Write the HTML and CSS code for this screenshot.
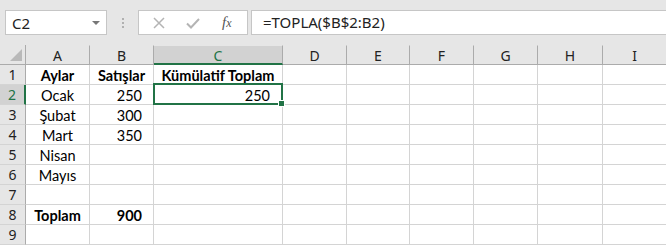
FILE: index.html
```html
<!DOCTYPE html>
<html lang="tr">

<head>
    <meta charset="UTF-8">
    <meta name="viewport" content="width=device-width, initial-scale=1.0">
    <title>Kümülatif Toplam</title>
    <link rel="stylesheet" href="styles.css">
</head>

<body>
    <div class="formula-bar">
        <div class="name-box">
            <span>C2</span>
            <span class="drop"></span>
        </div>
        <div class="grip">
            <span></span><span></span><span></span>
        </div>
        <div class="fx-box">
            <svg class="cancel" width="14" height="14" viewBox="0 0 14 14">
                <path d="M2 2 L12 12 M12 2 L2 12" stroke="#b4b4b4" stroke-width="1.5" fill="none" />
            </svg>
            <svg class="enter" width="16" height="14" viewBox="0 0 16 14">
                <path d="M2 7.5 L6 11.5 L14 3" stroke="#b4b4b4" stroke-width="2" fill="none" />
            </svg>
            <span class="fx">f<i>x</i></span>
        </div>
        <div class="formula-input">=TOPLA($B$2:B2)</div>
    </div>

    <div class="sheet">
        <div class="corner"><span></span></div>
        <div class="col-head">A</div>
        <div class="col-head">B</div>
        <div class="col-head active">C</div>
        <div class="col-head">D</div>
        <div class="col-head">E</div>
        <div class="col-head">F</div>
        <div class="col-head">G</div>
        <div class="col-head">H</div>
        <div class="col-head">I</div>

        <div class="row-head">1</div>
        <div class="cell center bold">Aylar</div>
        <div class="cell center bold">Satışlar</div>
        <div class="cell center bold">Kümülatif Toplam</div>
        <div class="cell"></div><div class="cell"></div><div class="cell"></div><div class="cell"></div><div class="cell"></div><div class="cell"></div>

        <div class="row-head active">2</div>
        <div class="cell center">Ocak</div>
        <div class="cell num">250</div>
        <div class="cell num selected">250<span class="handle"></span></div>
        <div class="cell"></div><div class="cell"></div><div class="cell"></div><div class="cell"></div><div class="cell"></div><div class="cell"></div>

        <div class="row-head">3</div>
        <div class="cell center">Şubat</div>
        <div class="cell num">300</div>
        <div class="cell"></div><div class="cell"></div><div class="cell"></div><div class="cell"></div><div class="cell"></div><div class="cell"></div><div class="cell"></div>

        <div class="row-head">4</div>
        <div class="cell center">Mart</div>
        <div class="cell num">350</div>
        <div class="cell"></div><div class="cell"></div><div class="cell"></div><div class="cell"></div><div class="cell"></div><div class="cell"></div><div class="cell"></div>

        <div class="row-head">5</div>
        <div class="cell center">Nisan</div>
        <div class="cell"></div><div class="cell"></div><div class="cell"></div><div class="cell"></div><div class="cell"></div><div class="cell"></div><div class="cell"></div><div class="cell"></div>

        <div class="row-head">6</div>
        <div class="cell center">Mayıs</div>
        <div class="cell"></div><div class="cell"></div><div class="cell"></div><div class="cell"></div><div class="cell"></div><div class="cell"></div><div class="cell"></div><div class="cell"></div>

        <div class="row-head">7</div>
        <div class="cell"></div><div class="cell"></div><div class="cell"></div><div class="cell"></div><div class="cell"></div><div class="cell"></div><div class="cell"></div><div class="cell"></div><div class="cell"></div>

        <div class="row-head">8</div>
        <div class="cell center bold">Toplam</div>
        <div class="cell num bold">900</div>
        <div class="cell"></div><div class="cell"></div><div class="cell"></div><div class="cell"></div><div class="cell"></div><div class="cell"></div><div class="cell"></div>

        <div class="row-head">9</div>
        <div class="cell"></div><div class="cell"></div><div class="cell"></div><div class="cell"></div><div class="cell"></div><div class="cell"></div><div class="cell"></div><div class="cell"></div><div class="cell"></div>
    </div>
</body>

</html>
```

FILE: styles.css
```css
body {
    margin: 0;
    padding: 0;
    width: 666px;
    height: 245px;
    overflow: hidden;
    background-color: #e6e6e6;
    font-family: 'Noto Sans', 'Open Sans', sans-serif;
}

.formula-bar {
    display: flex;
    align-items: center;
    height: 45px;
    box-sizing: border-box;
    padding: 10px 0 10px 5px;
}

.name-box {
    display: flex;
    align-items: center;
    justify-content: space-between;
    width: 102px;
    height: 25px;
    box-sizing: border-box;
    background-color: #fff;
    border: 1px solid #c6c6c6;
    padding: 0 6px 0 6px;
    font-size: 15px;
    color: #222;
}

.drop {
    width: 0;
    height: 0;
    border-left: 4px solid transparent;
    border-right: 4px solid transparent;
    border-top: 4px solid #777;
}

.grip {
    display: flex;
    flex-direction: column;
    gap: 2px;
    width: 31px;
    align-items: center;
}

.grip span {
    width: 2px;
    height: 2px;
    background-color: #b0b0b0;
}

.fx-box {
    display: flex;
    align-items: center;
    width: 110px;
    height: 25px;
    box-sizing: border-box;
    background-color: #fff;
    border: 1px solid #c6c6c6;
    padding: 0 0 0 13px;
}

.enter {
    margin-left: 19px;
}

.fx {
    margin-left: 21px;
    font-family: 'Liberation Serif', serif;
    font-style: italic;
    font-size: 15px;
    color: #555;
}

.fx i {
    font-size: 12px;
}

.formula-input {
    flex: 1;
    height: 25px;
    box-sizing: border-box;
    margin-left: 3px;
    background-color: #fff;
    border: 1px solid #c6c6c6;
    border-right: none;
    padding-left: 11px;
    font-size: 15px;
    line-height: 23px;
    color: #222;
}

.sheet {
    display: grid;
    grid-template-columns: 26px 64px 64px 129px 64px 63px 64px 64px 65px 64px;
    grid-template-rows: 20px repeat(9, 20px);
    background-color: #fff;
}

.corner {
    position: relative;
    background-color: #e6e6e6;
    border-right: 1px solid #ababab;
    border-bottom: 1px solid #ababab;
}

.corner span {
    position: absolute;
    right: 3px;
    bottom: 3px;
    width: 0;
    height: 0;
    border-left: 12px solid transparent;
    border-bottom: 12px solid #b9b9b9;
}

.col-head,
.row-head {
    display: flex;
    align-items: center;
    justify-content: center;
    box-sizing: border-box;
    background-color: #e6e6e6;
    font-size: 14px;
    color: #222;
}

.col-head {
    border-right: 1px solid #ababab;
    border-bottom: 1px solid #ababab;
    border-top: 1px solid #e6e6e6;
    padding-top: 1px;
}

.row-head {
    border-right: 1px solid #ababab;
    border-bottom: 1px solid #d4d4d4;
}

.col-head.active {
    background-color: #d2d2d2;
    color: #217346;
    border-bottom: 2px solid #217346;
}

.row-head.active {
    background-color: #d2d2d2;
    color: #217346;
    border-right: 2px solid #217346;
}

.cell {
    display: flex;
    align-items: center;
    box-sizing: border-box;
    border-right: 1px solid #d4d4d4;
    border-bottom: 1px solid #d4d4d4;
    padding: 1px 3px 0 3px;
    font-family: Lato, 'Noto Sans', sans-serif;
    font-size: 14.5px;
    color: #000;
    white-space: nowrap;
}

.center {
    justify-content: center;
}

.num {
    justify-content: flex-end;
    padding-right: 11px;
}

.bold {
    font-weight: bold;
}

.selected {
    position: relative;
    padding-right: 12px;
}

.selected::after {
    content: '';
    position: absolute;
    left: -1px;
    top: -2px;
    right: -1px;
    bottom: -1px;
    border: 2px solid #217346;
}

.handle {
    position: absolute;
    right: -3px;
    bottom: -3px;
    width: 5px;
    height: 5px;
    background-color: #217346;
    border: 1px solid #fff;
    z-index: 1;
}
```
